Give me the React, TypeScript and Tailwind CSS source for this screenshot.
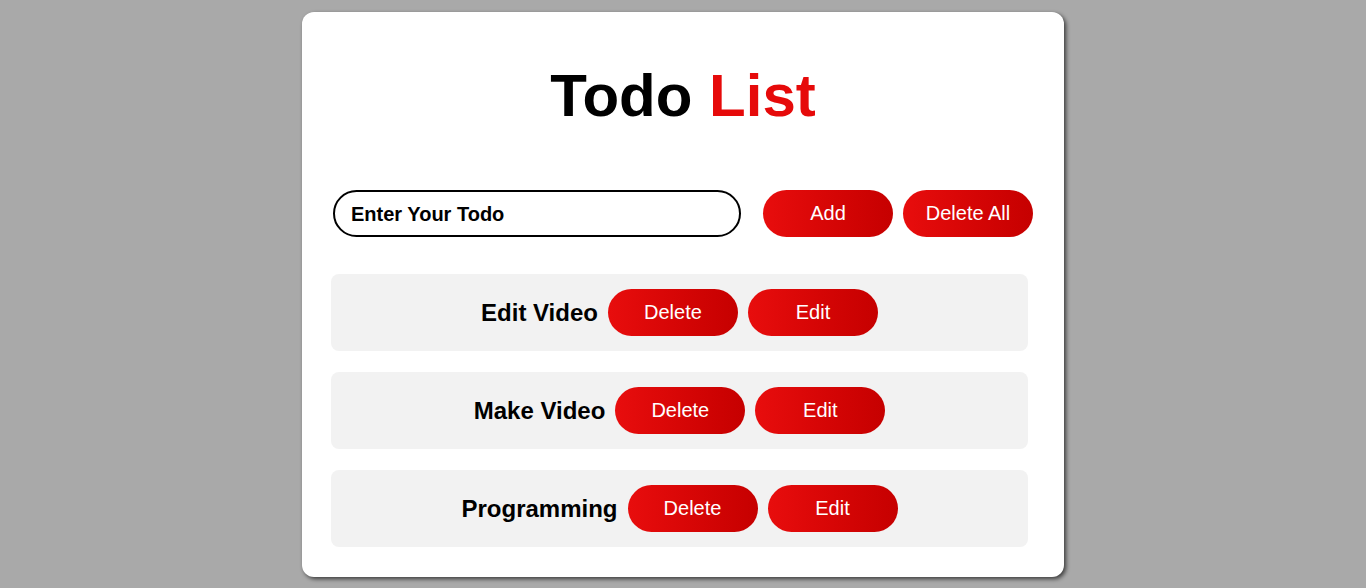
const todos = ['Edit Video', 'Make Video', 'Programming'];

const btn =
  'h-[47px] w-[130px] rounded-full bg-gradient-to-r from-[#e80d0d] to-[#c60000] pb-[1px] text-[20px] text-white';

export default function App() {
  return (
    <div
      className="flex min-h-[588px] justify-center bg-[#a9a9a9] pt-[12px]"
      style={{ fontFamily: '"Liberation Sans", Arial, sans-serif' }}
    >
      <div className="h-[565px] w-[762px] rounded-[12px] bg-white px-[29px] pt-[51px] shadow-[2px_2px_4px_rgba(0,0,0,0.65)]">
        <h1 className="text-center text-[60px] leading-[66px] font-bold text-black">
          Todo <span className="text-[#e60a0a]">List</span>
        </h1>

        <div className="mt-[61px] flex items-center pl-[2px]">
          <div className="flex h-[47px] w-[408px] items-center rounded-full border-2 border-black px-[16px]">
            <span className="text-[20px] font-bold text-black">Enter Your Todo</span>
          </div>
          <button className={`${btn} ml-[22px]`}>Add</button>
          <button className={`${btn} ml-[10px]`}>Delete All</button>
        </div>

        <div className="mt-[37px] flex w-[697px] flex-col gap-[21px]">
          {todos.map((t) => (
            <div
              key={t}
              className="flex h-[77px] items-center justify-center gap-[10px] rounded-[8px] bg-[#f2f2f2]"
            >
              <span className="text-[24px] font-bold text-black">{t}</span>
              <button className={btn}>Delete</button>
              <button className={btn}>Edit</button>
            </div>
          ))}
        </div>
      </div>
    </div>
  );
}
